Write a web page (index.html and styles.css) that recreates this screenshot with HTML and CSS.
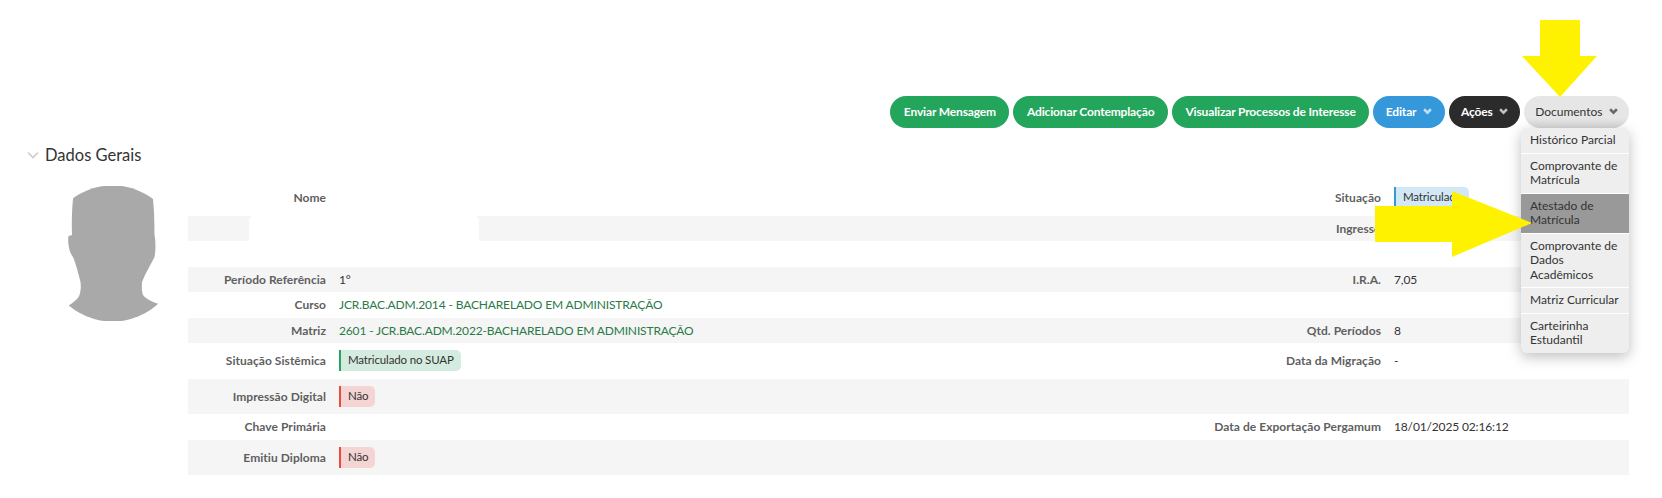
FILE: index.html
```html
<!DOCTYPE html>
<html lang="pt-BR">
<head>
<meta charset="utf-8">
<title>Dados Gerais</title>
<link rel="stylesheet" href="styles.css">
</head>
<body>
<div class="page">
  <div class="actions">
    <a class="btn green">Enviar Mensagem</a>
    <a class="btn green">Adicionar Contemplação</a>
    <a class="btn green">Visualizar Processos de Interesse</a>
    <a class="btn blue">Editar <svg class="caret" viewBox="0 0 8 6"><path d="M1 1l3 3 3-3"/></svg></a>
    <a class="btn dark">Ações <svg class="caret" viewBox="0 0 8 6"><path d="M1 1l3 3 3-3"/></svg></a>
    <div class="dropdown">
      <a class="btn gray">Documentos <svg class="caret" viewBox="0 0 8 6"><path d="M1 1l3 3 3-3"/></svg></a>
      <ul class="menu">
        <li>Histórico Parcial</li>
        <li>Comprovante de Matrícula</li>
        <li class="active">Atestado de Matrícula</li>
        <li>Comprovante de Dados Acadêmicos</li>
        <li>Matriz Curricular</li>
        <li>Carteirinha Estudantil</li>
      </ul>
    </div>
  </div>

  <h2 class="section-title"><svg class="section-chevron" viewBox="0 0 12 8"><path d="M1 1.5l5 5 5-5"/></svg>Dados Gerais</h2>

  <div class="content">
    <div class="photo">
      <svg viewBox="0 0 135 135" width="135" height="135">
        <defs><clipPath id="round"><circle cx="67.5" cy="67.5" r="68"/></clipPath></defs>
        <g clip-path="url(#round)">
          <path class="silhouette" d="M28.5 9C28 -4 107 -4 107.5 9C109 20 109.5 35 109.5 49C110.5 53 111 64 109.5 71C106 78 101 86 97 96C96.5 102 97 106 98 109C101 113 107 116 114 118L145 140L-10 140L23 120C29 116 33 113 34.5 109C36 104 36 100 35.5 96C33 86 31 78 28 71C24 66 22.5 56 23.5 50L27 49C26.5 35 27 20 28.5 9Z"/>
        </g>
      </svg>
    </div>
    <div class="table">
      <div class="row tall"><div class="label">Nome</div><div class="value"></div><div class="label">Situação</div><div class="value"><span class="badge info">Matriculado</span></div></div>
      <div class="row shaded"><div class="label"></div><div class="value"></div><div class="label">Ingresso</div><div class="value"></div><span class="redaction"></span></div>
      <div class="row"><div class="label"></div><div class="value"></div><div class="label"></div><div class="value"></div></div>
      <div class="row shaded"><div class="label">Período Referência</div><div class="value">1°</div><div class="label">I.R.A.</div><div class="value">7,05</div></div>
      <div class="row"><div class="label">Curso</div><div class="value"><a class="link">JCR.BAC.ADM.2014 - BACHARELADO EM ADMINISTRAÇÃO</a></div><div class="label"></div><div class="value"></div></div>
      <div class="row shaded"><div class="label">Matriz</div><div class="value"><a class="link">2601 - JCR.BAC.ADM.2022-BACHARELADO EM ADMINISTRAÇÃO</a></div><div class="label">Qtd. Períodos</div><div class="value">8</div></div>
      <div class="row tall"><div class="label">Situação Sistêmica</div><div class="value"><span class="badge success">Matriculado no SUAP</span></div><div class="label">Data da Migração</div><div class="value">-</div></div>
      <div class="row tall shaded"><div class="label">Impressão Digital</div><div class="value"><span class="badge danger">Não</span></div><div class="label"></div><div class="value"></div></div>
      <div class="row"><div class="label">Chave Primária</div><div class="value"></div><div class="label">Data de Exportação Pergamum</div><div class="value">18/01/2025 02:16:12</div></div>
      <div class="row tall shaded"><div class="label">Emitiu Diploma</div><div class="value"><span class="badge danger">Não</span></div><div class="label"></div><div class="value"></div></div>
    </div>
  </div>
</div>

<svg class="arrow arrow-down" viewBox="0 0 75 77" width="75" height="77"><path d="M18 0H58V36H75L38 77L0 36H18Z"/></svg>
<svg class="arrow arrow-right" viewBox="0 0 157 66" width="157" height="66"><path d="M0 15H77V0L157 32L77 66V51H0Z"/></svg>
</body>
</html>
```

FILE: styles.css
```css
* { box-sizing: border-box; }

html, body { margin: 0; padding: 0; }

body {
  width: 1662px;
  height: 498px;
  overflow: hidden;
  background: #fff;
  font-family: Lato, "Liberation Sans", sans-serif;
  font-size: 12px;
  color: #333;
  position: relative;
}

.page { padding: 96px 33px 0 24px; }

.actions {
  display: flex;
  justify-content: flex-end;
  gap: 4px;
  height: 32px;
}

.btn {
  display: flex;
  align-items: center;
  gap: 7px;
  height: 32px;
  padding: 0 13px 1px;
  border-radius: 16px;
  font-size: 12px;
  font-weight: 700;
  letter-spacing: -0.15px;
  color: #fff;
  white-space: nowrap;
}

.green { background: #23a55c; padding: 0 13.5px 1px; }
.blue { background: #3498db; padding: 0 12.5px 1px; }
.dark { background: #2b2b2b; padding: 0 12px 1px; gap: 6px; }
.gray {
  background: linear-gradient(#e6e6e6 70%, #d6d6d6);
  color: #333;
  font-weight: 400;
  letter-spacing: 0;
  padding: 0 11.5px 1px;
  gap: 6px;
}

.caret {
  width: 9px;
  height: 7px;
  fill: none;
  stroke: currentColor;
  stroke-width: 2.2;
  opacity: .7;
}

.dropdown { position: relative; }

.menu {
  position: absolute;
  top: 32px;
  right: 0;
  width: 108px;
  margin: 0;
  padding: 0;
  list-style: none;
  background: #eee;
  border-radius: 6px;
  box-shadow: 0 4px 14px rgba(0, 0, 0, .25);
  z-index: 2;
  overflow: hidden;
}

.menu li {
  padding: 5px 9px;
  line-height: 14.5px;
  font-size: 12px;
  color: #333;
  border-bottom: 1px solid #fff;
}

.menu li:last-child { border-bottom: 0; }

.menu .active { background: #999; }

.section-title {
  display: flex;
  align-items: center;
  gap: 6px;
  margin: 15px 0 0;
  padding-left: 3px;
  height: 24px;
  font-size: 16.5px;
  font-weight: 400;
  color: #333;
}

.section-chevron {
  width: 12px;
  height: 8px;
  fill: none;
  stroke: #ccc;
  stroke-width: 1.6;
}

.content {
  display: flex;
  margin-top: 13px;
}

.photo {
  width: 164px;
  padding: 6px 0 0 20.5px;
  flex: none;
}

.photo svg { display: block; }

.silhouette {
  fill: #a9a9a9;
  filter: blur(.7px);
}

.table { flex: 1; }

.row {
  position: relative;
  display: grid;
  grid-template-columns: 145px 1fr 250px 241px;
  height: 25.5px;
  align-items: center;
}

.tall { height: 35.5px; }

.shaded { background: #f5f5f5; }

.label {
  padding-right: 7px;
  text-align: right;
  font-weight: 700;
  letter-spacing: .05px;
  color: #5f5f5f;
  white-space: nowrap;
}

.value {
  padding-left: 6px;
  letter-spacing: -0.15px;
  white-space: nowrap;
}

.link { color: #2a7a48; }

.badge {
  display: inline-block;
  height: 21px;
  line-height: 20px;
  padding: 0 7px;
  border-left: 2px solid;
  border-radius: 0 5px 5px 0;
  font-size: 11.5px;
}

.info { background: #d3e8f7; border-color: #3498db; }
.success { background: #d4ecdf; border-color: #27a55d; }
.danger { background: #f5d5d3; border-color: #e74c3c; }

.redaction {
  position: absolute;
  left: 61px;
  top: 0;
  width: 230px;
  height: 100%;
  background: #fff;
  border-radius: 5px 5px 0 0;
}

.arrow {
  position: absolute;
  fill: #fff200;
  z-index: 3;
}

.arrow-down { left: 1522px; top: 20px; }
.arrow-right { left: 1375px; top: 191px; }
```
